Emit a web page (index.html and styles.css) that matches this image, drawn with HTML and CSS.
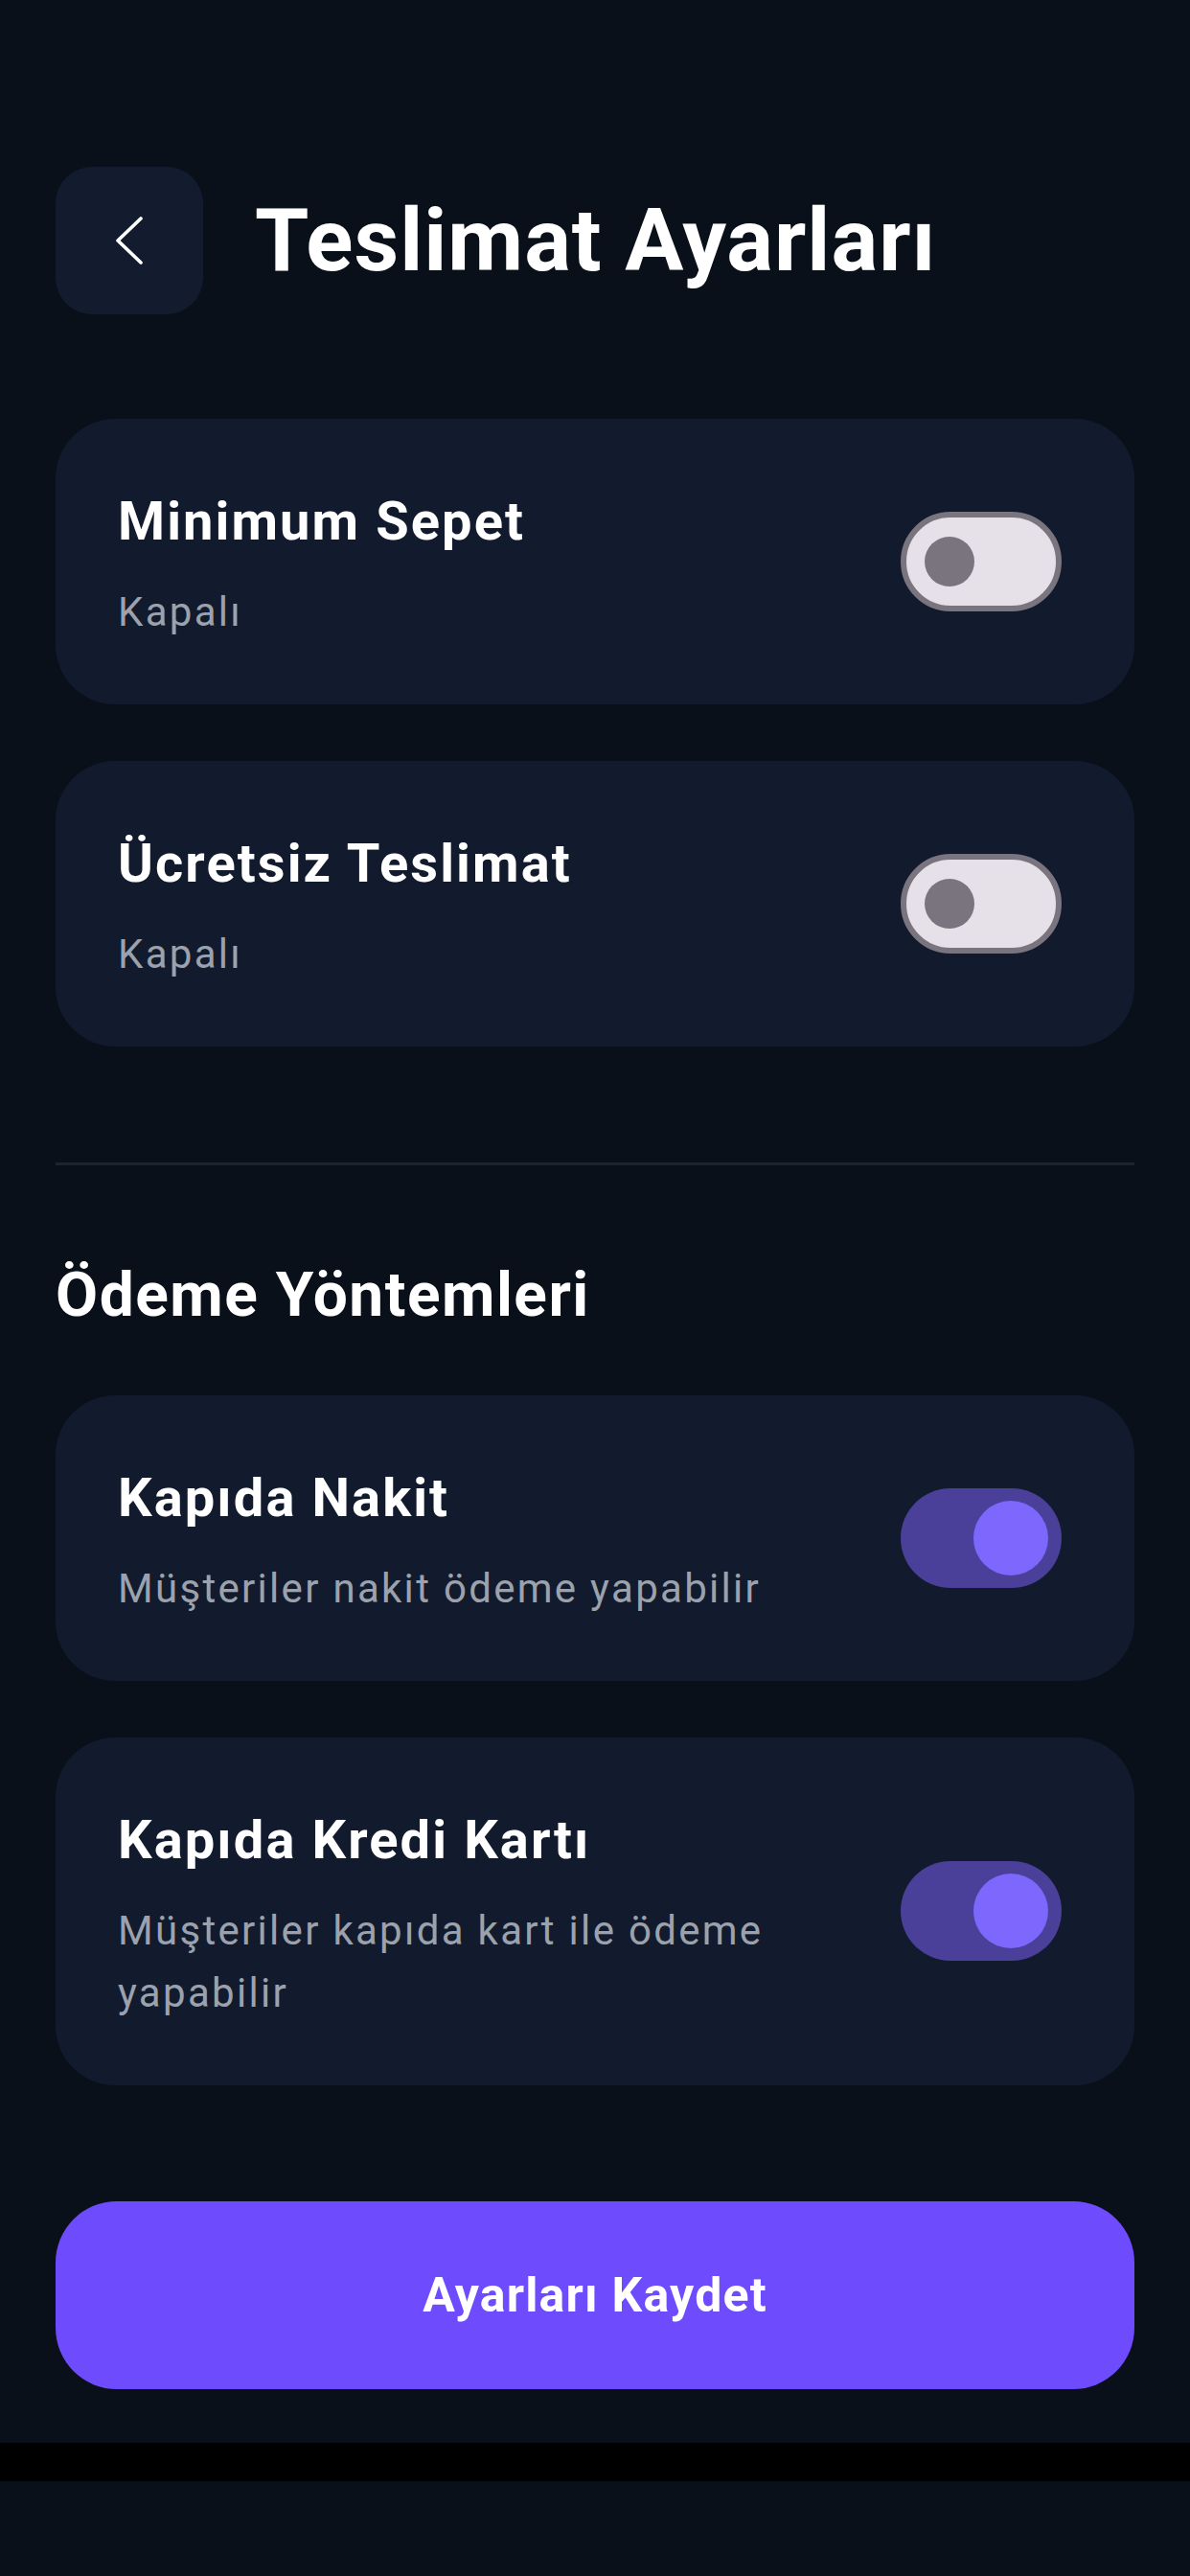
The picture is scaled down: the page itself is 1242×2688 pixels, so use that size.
FILE: index.html
```html
<!DOCTYPE html>
<html lang="tr">
<head>
<meta charset="utf-8">
<title>Teslimat Ayarları</title>
<link rel="stylesheet" href="styles.css">
</head>
<body>
<div class="screen">
  <main class="page">
    <header class="header">
      <button class="back" aria-label="Geri">
        <svg width="30" height="52" viewBox="0 0 30 52"><polyline points="27,3 3,26 27,49" fill="none" stroke="#ffffff" stroke-width="3.6" stroke-linecap="round" stroke-linejoin="round"/></svg>
      </button>
      <h1 class="title">Teslimat Ayarları</h1>
    </header>

    <section class="group first">
      <div class="card">
        <div class="card-text">
          <div class="card-title">Minimum Sepet</div>
          <div class="card-sub">Kapalı</div>
        </div>
        <div class="toggle off"><span class="thumb"></span></div>
      </div>
      <div class="card">
        <div class="card-text">
          <div class="card-title">Ücretsiz Teslimat</div>
          <div class="card-sub">Kapalı</div>
        </div>
        <div class="toggle off"><span class="thumb"></span></div>
      </div>
    </section>

    <hr class="divider">

    <h2 class="section-title">Ödeme Yöntemleri</h2>

    <section class="group">
      <div class="card">
        <div class="card-text">
          <div class="card-title">Kapıda Nakit</div>
          <div class="card-sub">Müşteriler nakit ödeme yapabilir</div>
        </div>
        <div class="toggle on"><span class="thumb"></span></div>
      </div>
      <div class="card">
        <div class="card-text">
          <div class="card-title">Kapıda Kredi Kartı</div>
          <div class="card-sub">Müşteriler kapıda kart ile ödeme yapabilir</div>
        </div>
        <div class="toggle on"><span class="thumb"></span></div>
      </div>
    </section>

    <button class="save">Ayarları Kaydet</button>
  </main>
  <div class="navbar"></div>
  <div class="bottom"></div>
</div>
</body>
</html>
```

FILE: styles.css
```css
* { box-sizing: border-box; }
html, body {
  margin: 0;
  padding: 0;
  background: #09101a;
}
body {
  font-family: Roboto, "Noto Sans", "Liberation Sans", sans-serif;
  color: #ffffff;
  width: 1242px;
  height: 2688px;
  overflow: hidden;
}
.screen {
  display: flex;
  flex-direction: column;
  height: 2688px;
}
.page {
  padding: 173px 58px 0 58px;
  display: flex;
  flex-direction: column;
}
.header {
  display: flex;
  align-items: center;
  gap: 54px;
  height: 156px;
}
.back {
  width: 154px;
  height: 154px;
  border: none;
  border-radius: 38px;
  background: #121c2e;
  display: flex;
  align-items: center;
  justify-content: center;
  padding: 0;
}
.title {
  margin: 0;
  font-size: 91px;
  font-weight: 700;
  line-height: 104px;
  letter-spacing: 1px;
}
.group {
  display: flex;
  flex-direction: column;
  gap: 59px;
}
.group.first {
  margin-top: 108px;
}
.card {
  background: #121b2d;
  border-radius: 62px;
  padding: 73px 76px 64px 65px;
  display: flex;
  align-items: center;
  gap: 40px;
}
.card-text {
  flex: 1;
  min-width: 0;
}
.card-title {
  font-size: 56px;
  font-weight: 700;
  line-height: 68px;
  letter-spacing: 2.1px;
}
.card-sub {
  margin-top: 28px;
  font-size: 42px;
  line-height: 65px;
  letter-spacing: 2.3px;
  color: #9ca2ad;
}
.toggle {
  position: relative;
  flex: none;
  width: 168px;
  height: 104px;
  border-radius: 52px;
  margin-bottom: 10px;
}
.toggle.off {
  background: #e6e0e9;
  border: 6px solid #79747e;
}
.toggle.off .thumb {
  position: absolute;
  left: 19px;
  top: 20px;
  width: 52px;
  height: 52px;
  border-radius: 50%;
  background: #79747e;
}
.toggle.on {
  background: #4a3f99;
}
.toggle.on .thumb {
  position: absolute;
  right: 14px;
  top: 13px;
  width: 78px;
  height: 78px;
  border-radius: 50%;
  background: #7d67fd;
}
.divider {
  margin: 121px 0 0 0;
  border: none;
  height: 3px;
  background: #1c2431;
}
.section-title {
  margin: 98px 0 66px 0;
  font-size: 64px;
  font-weight: 700;
  line-height: 76px;
  letter-spacing: 1.5px;
}
.save {
  margin-top: 121px;
  height: 196px;
  width: 100%;
  border: none;
  border-radius: 64px;
  background: #6e4cfe;
  color: #ffffff;
  font-family: Roboto, "Noto Sans", "Liberation Sans", sans-serif;
  font-size: 50px;
  font-weight: 700;
  letter-spacing: 1.2px;
}
.navbar {
  margin-top: 56px;
  height: 40px;
  background: #000000;
  flex: none;
}
.bottom {
  flex: 1;
  background: #09101a;
}
```
